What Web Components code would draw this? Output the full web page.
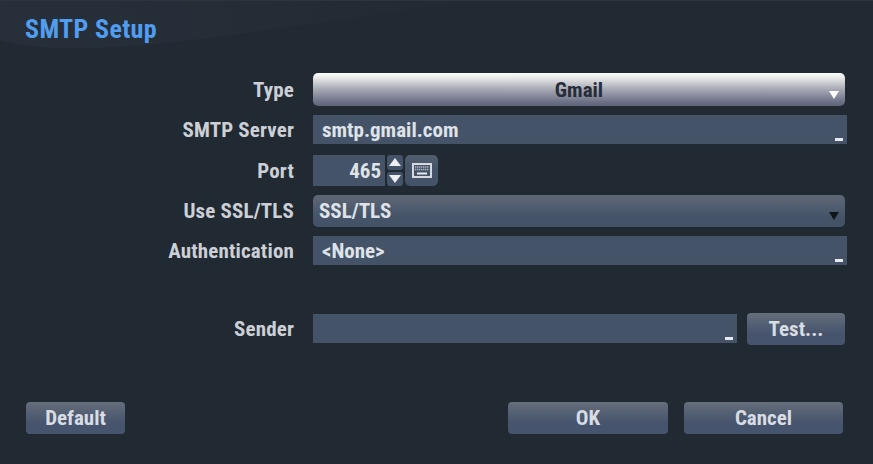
<!DOCTYPE html>
<html>
<head>
<meta charset="utf-8">
<title>SMTP Setup</title>
<style>
html, body { margin: 0; background: #212932; }
body { font: 700 21px Roboto, "Liberation Sans", sans-serif; font-stretch: 84%; color: #d5dae2; }
</style>
</head>
<body>
<smtp-dialog></smtp-dialog>
<script>
class FormRow extends HTMLElement {
    constructor() {
        super();
        this.attachShadow({ mode: 'open' });
        this.shadowRoot.innerHTML = `
        <style>
            :host { display: grid; grid-template-columns: 294px 1fr; column-gap: 19px; align-items: center; }
            .lbl { text-align: right; color: #ccd0d6; letter-spacing: .15px; }
            .val { display: flex; align-items: center; }
        </style>
        <div class="lbl">${this.getAttribute('label') || ''}</div>
        <div class="val"><slot></slot></div>`;
    }
}
customElements.define('form-row', FormRow);

class ComboBox extends HTMLElement {
    constructor() {
        super();
        this.attachShadow({ mode: 'open' });
        const focused = this.hasAttribute('focused');
        this.shadowRoot.innerHTML = `
        <style>
            :host { display: flex; flex: 1; position: relative; align-items: center; height: 32px; box-sizing: border-box; border-radius: 5px; padding-left: 6px; }
            :host([focused]) { justify-content: center; padding-left: 0; height: 33px; color: #262d38;
                background: linear-gradient(#fdfdfd 0%, #e2e2e4 18%, #a5a8b3 50%, #6b7086 88%, #5d6277 100%); }
            :host(:not([focused])) { color: #dfe3e9; background: linear-gradient(#5f6774 0%, #4d5a6e 45%, #445368 70%, #445368 100%); }
            svg { position: absolute; right: 6px; bottom: 7px; }
        </style>
        <slot></slot>
        <svg width="10" height="8" viewBox="0 0 10 8"><path d="M0 0H10L5 8Z" fill="${focused ? '#fff' : '#10151c'}"/></svg>`;
    }
}
customElements.define('combo-box', ComboBox);

class TextField extends HTMLElement {
    constructor() {
        super();
        this.attachShadow({ mode: 'open' });
        this.shadowRoot.innerHTML = `
        <style>
            :host { display: flex; position: relative; flex: 1; height: 29px; align-items: center; box-sizing: border-box; padding-left: 9px; background: #445368; color: #dfe3e9; }
            i { position: absolute; right: 4px; bottom: 3px; width: 8px; height: 3px; background: #e6e9ee; }
        </style>
        <slot></slot><i></i>`;
    }
}
customElements.define('text-field', TextField);

class PortSpin extends HTMLElement {
    constructor() {
        super();
        this.attachShadow({ mode: 'open' });
        this.shadowRoot.innerHTML = `
        <style>
            :host { display: flex; align-items: center; height: 31px; }
            .num { width: 72px; height: 31px; box-sizing: border-box; background: #445368; color: #dfe3e9; display: flex; align-items: center; justify-content: flex-end; padding-right: 4px; }
            .spin { display: flex; flex-direction: column; gap: 2px; margin-left: 2px; }
            .spin div { width: 16px; height: 14.500px; background: #445368; border-radius: 3px; display: flex; align-items: center; justify-content: center; }
            .kbd { width: 33px; height: 31px; margin-left: 2px; border-radius: 5px; background: linear-gradient(#525d6e, #445368 50%); display: flex; align-items: center; justify-content: center; }
        </style>
        <div class="num"><slot></slot></div>
        <div class="spin">
            <div><svg width="12" height="8" viewBox="0 0 12 8"><path d="M6 0L12 8H0Z" fill="#eceef2"/></svg></div>
            <div><svg width="12" height="8" viewBox="0 0 12 8"><path d="M0 0H12L6 8Z" fill="#eceef2"/></svg></div>
        </div>
        <div class="kbd">
            <svg width="20" height="15" viewBox="0 0 20 15">
                <rect x="1" y="1" width="18" height="13" fill="none" stroke="#d6dae0" stroke-width="2"/>
                <path d="M3 4h14M3 6.500h14" stroke="#aeb5c0" stroke-width="1.600" stroke-dasharray="1.400 .6"/>
                <path d="M5 10.500h10" stroke="#e6e9ee" stroke-width="2"/>
            </svg>
        </div>`;
    }
}
customElements.define('port-spin', PortSpin);

class DlgButton extends HTMLElement {
    constructor() {
        super();
        this.attachShadow({ mode: 'open' });
        this.shadowRoot.innerHTML = `
        <style>
            :host { display: flex; align-items: center; justify-content: center; height: 32px; box-sizing: border-box; border-radius: 4px; background: linear-gradient(#666e7b 0%, #515d72 40%, #47546d 65%, #47546d 100%); color: #d8dce3; }
        </style>
        <slot></slot>`;
    }
}
customElements.define('dlg-button', DlgButton);

class SmtpDialog extends HTMLElement {
    constructor() {
        super();
        this.attachShadow({ mode: 'open' });
        this.shadowRoot.innerHTML = `
        <style>
            :host { display: block; position: relative; width: 873px; height: 464px; background: #212932; overflow: hidden; }
            .swoosh { position: absolute; left: 0; top: 0; }
            h1 { position: relative; margin: 0; padding: 15px 0 0 25px; height: 73px; box-sizing: border-box; font-size: 26px; line-height: 29px; font-weight: 700; letter-spacing: .35px; color: #519df0; }
            .form { position: relative; display: flex; flex-direction: column; padding-right: 26px; }
            .r1 { margin-bottom: 9px; padding-right: 2px; }
            .r2 { margin-bottom: 11px; }
            .r3 { margin-bottom: 9px; }
            .r4 { margin-bottom: 9px; padding-right: 2px; }
            .r5 { margin-bottom: 48px; }
            .sender { width: 424px; flex: none; align-self: flex-start; margin-top: 1px; }
            .test { width: 98px; margin-left: 10px; }
            .foot { position: relative; display: flex; padding: 57px 30px 0 26px; }
            .def { width: 99px; margin-right: auto; }
            .ok { width: 160px; margin-right: 16px; }
            .cancel { width: 159px; }
        </style>
        <svg class="swoosh" width="873" height="60" viewBox="0 0 873 60">
            <defs><linearGradient id="sw" x1="0" x2="1" y1="0" y2="0">
                <stop offset="0" stop-color="#27303a"/><stop offset=".6" stop-color="#242c36"/><stop offset="1" stop-color="#212932"/>
            </linearGradient></defs>
            <path d="M0 0H470C400 12 330 22 280 28C210 38 150 46 90 48C50 49 20 46 0 40Z" fill="url(#sw)"/>
            <path d="M0 .5H873" stroke="#2c343e"/>
        </svg>
        <h1>SMTP Setup</h1>
        <div class="form">
            <form-row class="r1" label="Type"><combo-box focused>Gmail</combo-box></form-row>
            <form-row class="r2" label="SMTP Server"><text-field>smtp.gmail.com</text-field></form-row>
            <form-row class="r3" label="Port"><port-spin>465</port-spin></form-row>
            <form-row class="r4" label="Use SSL/TLS"><combo-box>SSL/TLS</combo-box></form-row>
            <form-row class="r5" label="Authentication"><text-field>&lt;None&gt;</text-field></form-row>
            <form-row label="Sender"><text-field class="sender"></text-field><dlg-button class="test">Test...</dlg-button></form-row>
        </div>
        <div class="foot">
            <dlg-button class="def">Default</dlg-button>
            <dlg-button class="ok">OK</dlg-button>
            <dlg-button class="cancel">Cancel</dlg-button>
        </div>`;
    }
}
customElements.define('smtp-dialog', SmtpDialog);
</script>
</body>
</html>
